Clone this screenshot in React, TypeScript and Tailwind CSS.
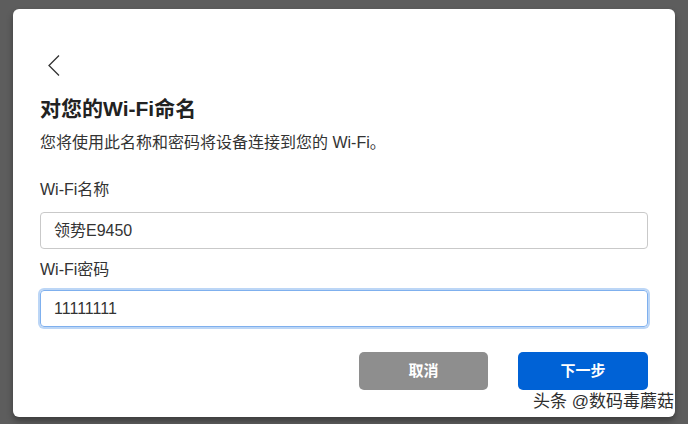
const font = { fontFamily: '"Liberation Sans", "Noto Sans CJK SC", sans-serif' };

export default function App() {
    return (
        <div className="w-[688px] h-[424px] bg-[#5d5d5d] pt-[9px] pl-[13px] relative overflow-hidden" style={font}>
            <div className="w-[662px] h-[408px] bg-white rounded-[6px] shadow-[0_4px_6px_rgba(0,0,0,0.35)] pt-[46px] pl-[27px] pr-[27px] flex flex-col">
                <button className="w-[20px] h-[20px] ml-[4px] flex items-center justify-center text-[#333]">
                    <svg width="12" height="21" viewBox="0 0 12 21" fill="none" stroke="currentColor" strokeWidth="1.3">
                        <polyline points="11,0.5 1,10.5 11,20.5" />
                    </svg>
                </button>
                <h1 className="mt-[20px] text-[21px] leading-[28px] font-bold text-[#222]">对您的Wi-Fi命名</h1>
                <p className="mt-[9px] text-[16px] leading-[22px] text-[#333]">您将使用此名称和密码将设备连接到您的 Wi-Fi。</p>

                <label className="mt-[25px] text-[16px] leading-[22px] text-[#333]">Wi-Fi名称</label>
                <div className="mt-[11px] h-[37px] border border-[#c9c9c9] rounded-[4px] flex items-center px-[13px] text-[16px] text-[#333]">
                    领势E9450
                </div>

                <label className="mt-[10px] text-[16px] leading-[22px] text-[#333]">Wi-Fi密码</label>
                <div className="mt-[9px] h-[37px] border border-[#7fb0ee] rounded-[4px] shadow-[0_0_0_2px_#bcd6f6] flex items-center px-[13px] text-[16px] text-[#333]">
                    11111111
                </div>

                <div className="mt-[25px] flex justify-end gap-[30px]">
                    <button className="w-[129px] h-[38px] rounded-[5px] bg-[#8e8e8e] text-white text-[15px] font-bold">取消</button>
                    <button className="w-[130px] h-[38px] rounded-[5px] bg-[#0062d6] text-white text-[15px] font-bold">下一步</button>
                </div>
            </div>
            <div
                className="absolute left-[533px] top-[392px] text-[17px] leading-[20px] text-[#2e2e2e] whitespace-nowrap"
                style={{ textShadow: '0 0 2px #fff, 0 0 2px #fff, 0 0 1px #fff' }}
            >
                头条 @数码毒蘑菇
            </div>
        </div>
    );
}
